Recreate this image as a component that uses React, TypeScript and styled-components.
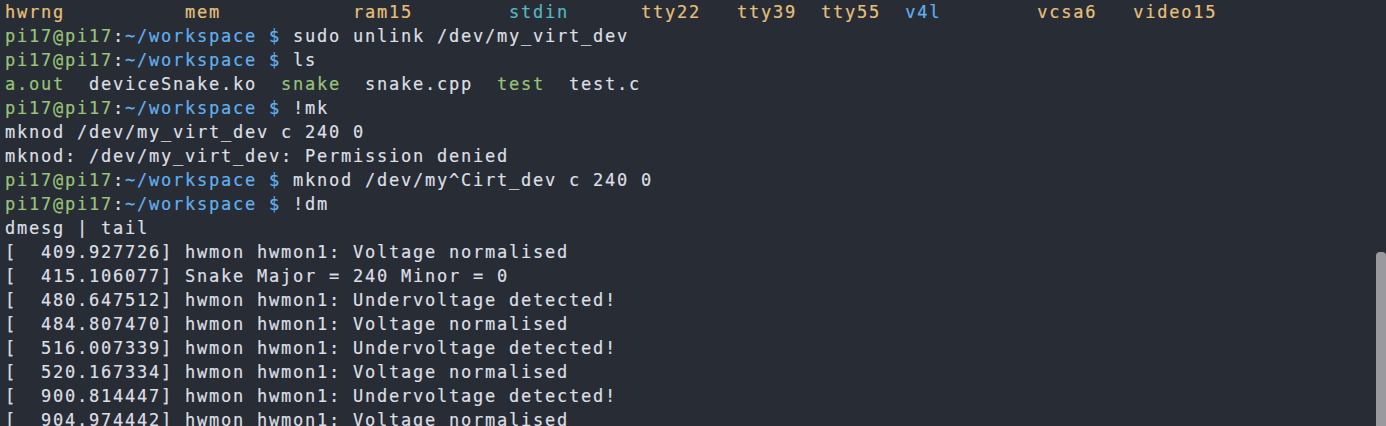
import React from "react";
import styled, { createGlobalStyle } from "styled-components";

const GlobalStyle = createGlobalStyle`
  html, body {
    margin: 0;
    padding: 0;
    background: #282c34;
    overflow: hidden;
  }
`;

const palette = {
  fg: "#dcdfe4",
  yellow: "#e5c07b",
  green: "#98c379",
  blue: "#61afef",
  cyan: "#56b6c2",
};

type Tone = keyof typeof palette;
type Seg = { t: string; c?: Tone };

const Terminal = styled.div`
  position: relative;
  width: 1386px;
  height: 426px;
  background: #282c34;
  overflow: hidden;
  display: flex;
  flex-direction: column;
  padding: 0 0 0 5px;
  box-sizing: border-box;
`;

const Line = styled.div`
  font-family: "DejaVu Sans Mono", "Liberation Mono", monospace;
  font-size: 17px;
  letter-spacing: 1.766px;
  line-height: 24px;
  height: 24px;
  white-space: pre;
  color: ${palette.fg};
  -webkit-text-stroke: 0.2px currentColor;
  flex: none;
`;

const Span = styled.span<{ $tone: Tone }>`
  color: ${(p) => palette[p.$tone]};
`;

const ScrollTrack = styled.div`
  position: absolute;
  top: 0;
  right: 0;
  bottom: 0;
  width: 10px;
  display: flex;
  flex-direction: column;
  padding-top: 252px;
  box-sizing: border-box;
`;

const ScrollThumb = styled.div`
  flex: 1;
  background: #9a9a9e;
  border-radius: 4px 4px 0 0;
`;

const prompt = (cmd: string): Seg[] => [
  { t: "pi17@pi17", c: "green" },
  { t: ":", c: "fg" },
  { t: "~/workspace $", c: "blue" },
  { t: " " + cmd, c: "fg" },
];

const dmesg = (ts: string, msg: string): Seg[] => [
  { t: `[  ${ts}] ${msg}`, c: "fg" },
];

const lines: Seg[][] = [
  [
    { t: "hwrng".padEnd(15), c: "yellow" },
    { t: "mem".padEnd(14), c: "yellow" },
    { t: "ram15".padEnd(13), c: "yellow" },
    { t: "stdin", c: "cyan" },
    { t: "".padEnd(6) },
    { t: "tty22".padEnd(8), c: "yellow" },
    { t: "tty39".padEnd(7), c: "yellow" },
    { t: "tty55".padEnd(7), c: "yellow" },
    { t: "v4l", c: "blue" },
    { t: "".padEnd(8) },
    { t: "vcsa6".padEnd(8), c: "yellow" },
    { t: "video15", c: "yellow" },
  ],
  prompt("sudo unlink /dev/my_virt_dev"),
  prompt("ls"),
  [
    { t: "a.out", c: "green" },
    { t: "  deviceSnake.ko  " },
    { t: "snake", c: "green" },
    { t: "  snake.cpp  " },
    { t: "test", c: "green" },
    { t: "  test.c" },
  ],
  prompt("!mk"),
  [{ t: "mknod /dev/my_virt_dev c 240 0" }],
  [{ t: "mknod: /dev/my_virt_dev: Permission denied" }],
  prompt("mknod /dev/my^Cirt_dev c 240 0"),
  prompt("!dm"),
  [{ t: "dmesg | tail" }],
  dmesg("409.927726", "hwmon hwmon1: Voltage normalised"),
  dmesg("415.106077", "Snake Major = 240 Minor = 0"),
  dmesg("480.647512", "hwmon hwmon1: Undervoltage detected!"),
  dmesg("484.807470", "hwmon hwmon1: Voltage normalised"),
  dmesg("516.007339", "hwmon hwmon1: Undervoltage detected!"),
  dmesg("520.167334", "hwmon hwmon1: Voltage normalised"),
  dmesg("900.814447", "hwmon hwmon1: Undervoltage detected!"),
  dmesg("904.974442", "hwmon hwmon1: Voltage normalised"),
];

export default function App() {
  return (
    <>
      <GlobalStyle />
      <Terminal>
        {lines.map((segs, i) => (
          <Line key={i}>
            {segs.map((s, j) => (
              <Span key={j} $tone={s.c ?? "fg"}>
                {s.t}
              </Span>
            ))}
          </Line>
        ))}
        <ScrollTrack>
          <ScrollThumb />
        </ScrollTrack>
      </Terminal>
    </>
  );
}
